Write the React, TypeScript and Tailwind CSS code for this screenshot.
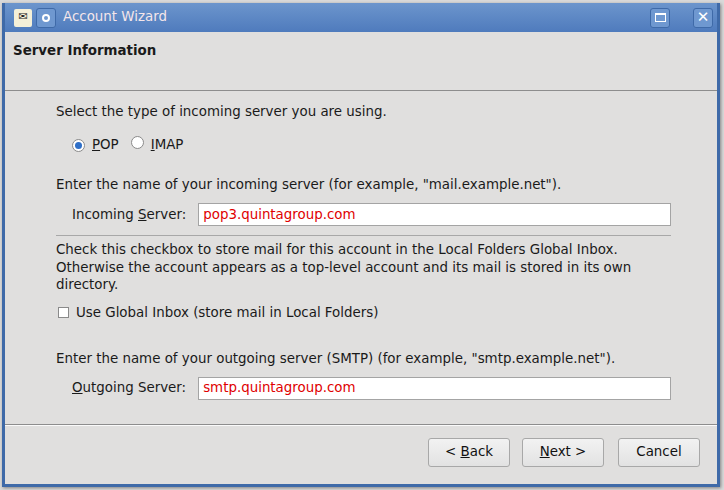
import React from "react";

const font = { fontFamily: '"DejaVu Sans", sans-serif' };

function Radio({ on }: { on?: boolean }) {
  return (
    <span className="inline-flex h-[13px] w-[13px] items-center justify-center rounded-full border border-[#8a8a8a] bg-white">
      {on && <span className="h-[7px] w-[7px] rounded-full bg-[#2f6fc7]" />}
    </span>
  );
}

function Btn({ children }: { children: React.ReactNode }) {
  return (
    <button className="h-[29px] w-[82px] rounded-[3px] border border-[#a8a8a8] bg-gradient-to-b from-[#f2f2f2] to-[#e2e2e2] text-[13.4px] text-[#111]">
      {children}
    </button>
  );
}

export default function App() {
  return (
    <div style={font} className="h-[490px] w-[724px] bg-[#d9d9d9] pl-[2px] pt-[3px] text-[13.4px] text-[#1a1a1a]">
      <div className="flex h-[484px] w-[718px] flex-col border-x-[3px] border-b-[3px] border-[#3f6aa8] bg-[#e0dfde] shadow-[1px_1px_3px_rgba(0,0,0,0.4)]">
        <div className="flex h-[29px] items-center bg-gradient-to-b from-[#6c95cc] to-[#4f7bbd] pl-[9px] pr-[4px]">
          <span className="flex h-[18px] w-[18px] items-center justify-center rounded-[2px] bg-[#f5f0d8] text-[11px]">✉</span>
          <span className="ml-[4px] flex h-[20px] w-[20px] items-center justify-center rounded-[3px] border border-[#3f6aa8] bg-[#6f98d0]">
            <span className="h-[8px] w-[8px] rounded-full border-2 border-white" />
          </span>
          <span className="ml-[7px] text-[13.4px] text-[#f4e6ea]">Account Wizard</span>
          <span className="flex-1" />
          <span className="flex h-[20px] w-[20px] items-center justify-center rounded-[3px] border border-[#3f6aa8] bg-[#6f98d0]">
            <span className="h-[9px] w-[11px] border border-t-2 border-white" />
          </span>
          <span className="ml-[23px] flex h-[20px] w-[20px] items-center justify-center rounded-[3px] border border-[#3f6aa8] bg-[#6f98d0] text-[15px] font-bold leading-none text-white">✕</span>
        </div>
        <div className="h-[59px] border-b border-[#8d8d8d] pl-[8px] pt-[9px] text-[13.4px] font-bold">Server Information</div>
        <div className="flex-1 pl-[51px] pr-[46px]">
          <div className="mt-[11px]">Select the type of incoming server you are using.</div>
          <div className="mt-[13px] flex items-center pl-[16px]">
            <Radio on /><span className="ml-[7px]"><u>P</u>OP</span>
            <span className="ml-[12px]"><Radio /></span><span className="ml-[7px]"><u>I</u>MAP</span>
          </div>
          <div className="mt-[20px]">Enter the name of your incoming server (for example, "mail.example.net").</div>
          <div className="mt-[8px] flex items-center pl-[16px]">
            <span>Incoming <u>S</u>erver:</span>
            <div className="ml-[12px] flex h-[23px] flex-1 items-center border border-[#a4a4a4] bg-white px-[4px] text-[#e00000]">pop3.quintagroup.com</div>
          </div>
          <div className="mt-[9px] border-t border-[#a8a8a8] pt-[5px] leading-[17.5px]">
            Check this checkbox to store mail for this account in the Local Folders Global Inbox.<br />
            Otherwise the account appears as a top-level account and its mail is stored in its own<br />
            directory.
          </div>
          <div className="mt-[9px] flex items-center pl-[2px]">
            <span className="h-[11px] w-[11px] border border-[#8a8a8a] bg-white" />
            <span className="ml-[7px]">Use Global Inbox (store mail in Local Folders)</span>
          </div>
          <div className="mt-[26px]">Enter the name of your outgoing server (SMTP) (for example, "smtp.example.net").</div>
          <div className="mt-[8px] flex items-center pl-[16px]">
            <span><u>O</u>utgoing Server:</span>
            <div className="ml-[12px] flex h-[23px] flex-1 items-center border border-[#a4a4a4] bg-white px-[4px] text-[#e00000]">smtp.quintagroup.com</div>
          </div>
        </div>
        <div className="flex h-[60px] items-center justify-end gap-[12px] border-t border-[#8d8d8d] pb-[4px] pr-[17px] shadow-[inset_0_1px_0_#fafafa]">
          <Btn>&lt; <u>B</u>ack</Btn>
          <Btn><u>N</u>ext &gt;</Btn>
          <span className="ml-[2px]"><Btn>Cancel</Btn></span>
        </div>
      </div>
    </div>
  );
}
